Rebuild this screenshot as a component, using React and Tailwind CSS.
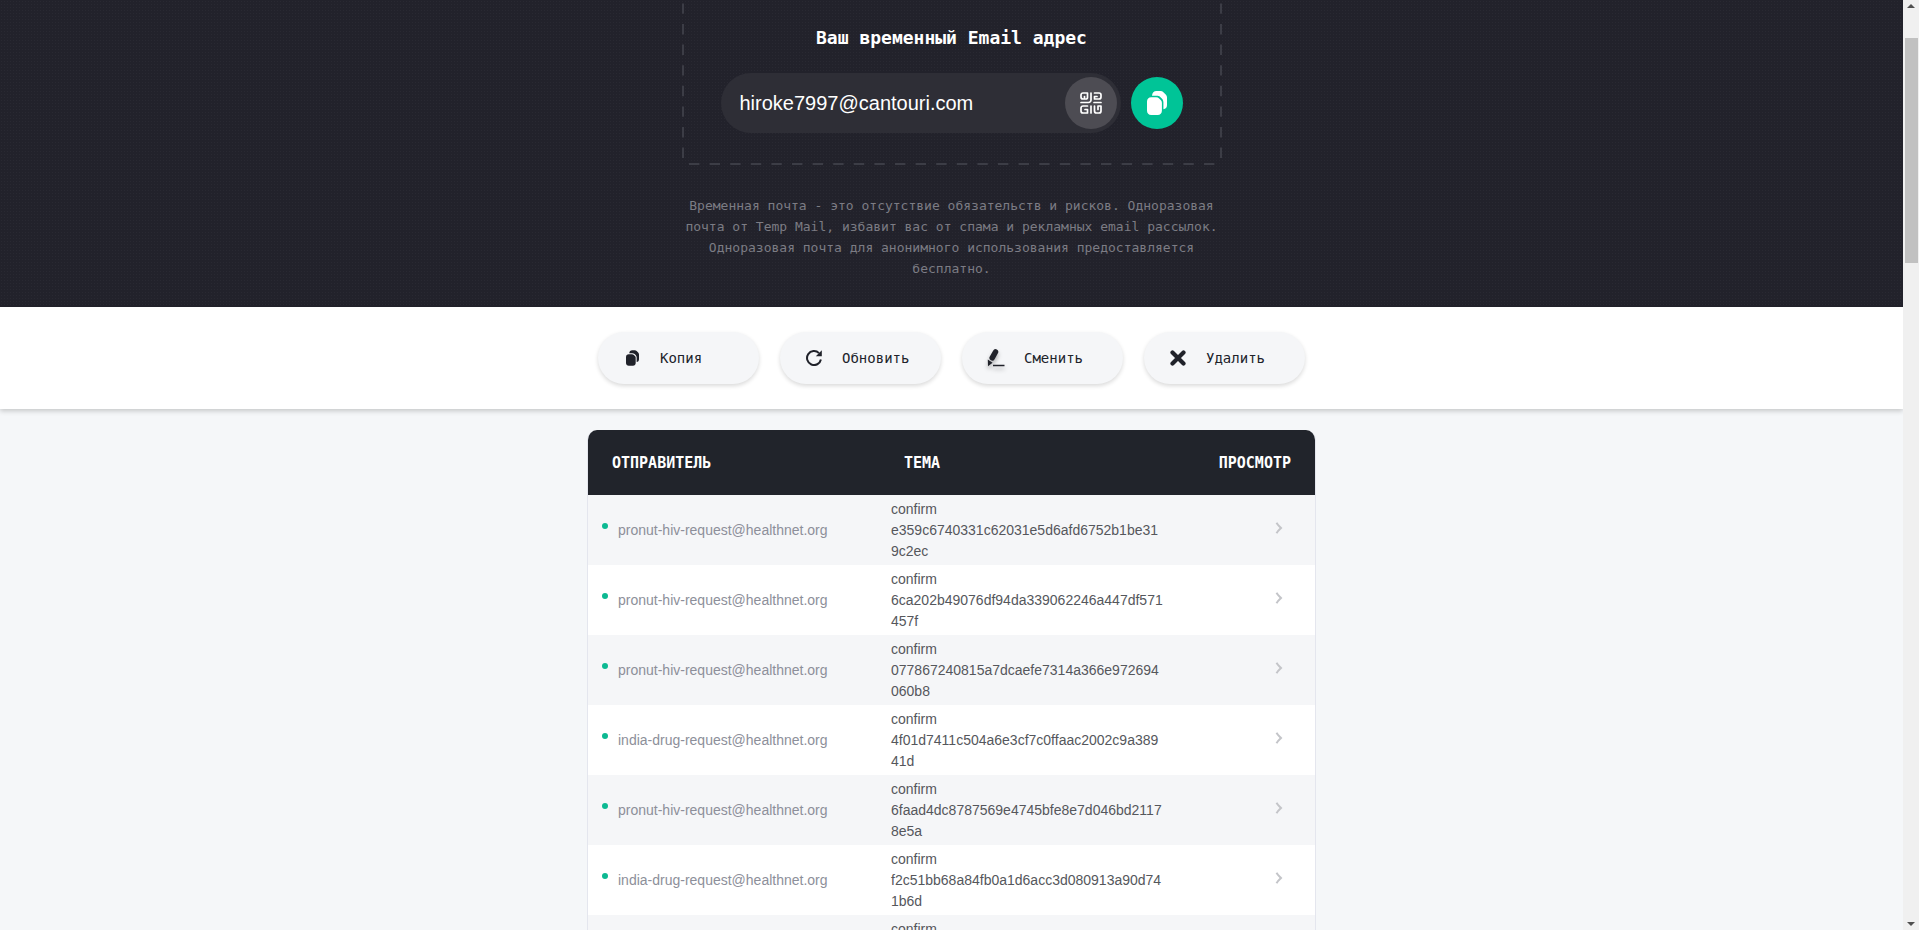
import { useState } from "react";

const EMAIL = "hiroke7997@cantouri.com";

const messages = [
  { id: 1, from: "pronut-hiv-request@healthnet.org", code: "e359c6740331c62031e5d6afd6752b1be319c2ec" },
  { id: 2, from: "pronut-hiv-request@healthnet.org", code: "6ca202b49076df94da339062246a447df571457f" },
  { id: 3, from: "pronut-hiv-request@healthnet.org", code: "077867240815a7dcaefe7314a366e972694060b8" },
  { id: 4, from: "india-drug-request@healthnet.org", code: "4f01d7411c504a6e3cf7c0ffaac2002c9a38941d" },
  { id: 5, from: "pronut-hiv-request@healthnet.org", code: "6faad4dc8787569e4745bfe8e7d046bd21178e5a" },
  { id: 6, from: "india-drug-request@healthnet.org", code: "f2c51bb68a84fb0a1d6acc3d080913a90d741b6d" },
  { id: 7, from: "", code: "" },
];

const CopyIcon = ({ className }) => (
  <svg viewBox="0 0 20 24" className={className} fill="currentColor" aria-hidden="true">
    <path d="M5 4.800C5.200 1.800 6.900 0 9.500 0h4c1.200 0 2.100.4 2.900 1.200l2.300 2.400c.9.9 1.300 1.800 1.300 3v7.400c0 2.500-1.300 4-3.600 4.300V11.300c0-1.600-.5-2.800-1.600-3.900L13.200 5.900C12.200 5 11 4.800 9.600 4.800z" />
    <path d="M4.200 6.200h5c1.200 0 2.100.4 2.900 1.200l1.600 1.600c.8.8 1.200 1.700 1.200 2.800v8c0 2.500-1.700 4.200-4.200 4.200H4.200C1.700 24 0 22.300 0 19.800v-9.400C0 7.900 1.700 6.200 4.200 6.200z" />
  </svg>
);

const QrIcon = () => (
  <svg viewBox="0 0 22 22" className="h-[22px] w-[22px]" fill="none" stroke="currentColor" strokeWidth="1.700" strokeLinecap="round" strokeLinejoin="round" aria-hidden="true">
    <path d="M4.500 4.500V7H3a2 2 0 0 1-2-2V3a2 2 0 0 1 2-2h4.500v4.500A1.500 1.500 0 0 1 6 7" />
    <path d="M11 1v7a2.500 2.500 0 0 1-2.500 2.500H1" />
    <path d="M14.500 1H19a2 2 0 0 1 2 2v2a2 2 0 0 1-2 2h-4.500V4.500H17" />
    <path d="M14 10.500h7" />
    <path d="M7.500 14H3a2 2 0 0 0-2 2v3a2 2 0 0 0 2 2h4.500v-3.500H5" />
    <path d="M11 14v7" />
    <path d="M14.500 14v5a2 2 0 0 0 2 2H19a2 2 0 0 0 2-2v-5h-3v3.500" />
  </svg>
);

const RefreshIcon = () => (
  <svg viewBox="0 0 16 16" className="h-4 w-4" aria-hidden="true">
    <path d="M14.900 9.500A7 7 0 1 1 13 3.100" fill="none" stroke="currentColor" strokeWidth="2" />
    <path d="M15.800.3v6h-6z" fill="currentColor" />
  </svg>
);

const ChangeIcon = () => (
  <svg viewBox="0 0 18 18" className="h-[18px] w-[18px] drop-shadow-[0_3px_2px_rgba(0,0,0,0.3)]" aria-hidden="true">
    <path d="M5.200 8.800 8.500 3" stroke="currentColor" strokeWidth="5.500" strokeLinecap="round" />
    <path d="M.8 10.600 5.600 13.800 1 17.300z" fill="currentColor" />
    <path d="M6 16.500h11.500" stroke="currentColor" strokeWidth="1.500" />
  </svg>
);

const DeleteIcon = () => (
  <svg viewBox="0 0 16 16" className="h-4 w-4" aria-hidden="true">
    <path d="M2.500 2.500l11 11M13.500 2.500l-11 11" stroke="currentColor" strokeWidth="4.200" strokeLinecap="round" />
  </svg>
);

const ActionButton = ({ icon, label, onClick }) => (
  <button
    type="button"
    onClick={onClick}
    className="flex h-[52px] w-[161px] items-center gap-[18px] rounded-full bg-[#f5f6f8] pl-6 text-[14px] text-[#20222a] shadow-[0_2px_4px_rgba(0,0,0,0.15)] hover:bg-gray-200"
  >
    <span className="flex w-5 justify-center">{icon}</span>
    {label}
  </button>
);

const Scrollbar = () => (
  <div className="flex w-4 shrink-0 flex-col items-center bg-[#f0f0f0]" aria-hidden="true">
    <svg viewBox="0 0 8 4" className="mt-1 h-1 w-2" fill="#505050">
      <path d="M4 0l4 4H0z" />
    </svg>
    <div className="mt-[30px] h-[225px] w-[13px] bg-[#c1c1c1]" />
    <svg viewBox="0 0 8 4" className="mt-auto mb-1 h-1 w-2" fill="#505050">
      <path d="M4 4L0 0h8z" />
    </svg>
  </div>
);

const App = () => {
  const [items, setItems] = useState(messages);

  const handleCopy = () => {
    navigator.clipboard?.writeText(EMAIL);
  };

  return (
    <div className="flex h-screen overflow-hidden bg-[#f5f7f9] font-['DejaVu_Sans_Mono',monospace]">
      <div className="min-w-0 flex-1 overflow-hidden">
        <header className="flex flex-col items-center bg-[#22222b] bg-[radial-gradient(circle,rgba(255,255,255,0.03)_1px,transparent_1px)] bg-[size:3px_3px] pb-7">
          <div className="relative w-full max-w-[540px] px-[39px] pt-6 pb-8">
            {/* dashed frame */}
            <svg
              viewBox="0 0 540 165"
              className="pointer-events-none absolute bottom-0 left-0 w-full"
              fill="none"
              stroke="#3c3d46"
              strokeWidth="2"
              strokeDasharray="10.400 10.200"
              aria-hidden="true"
            >
              <path d="M1 158V0" />
              <path d="M539 158V0" />
              <path d="M7 164H534" />
            </svg>
            <h1 className="mb-[21px] text-center text-[18px] leading-7 font-bold text-white">
              Ваш временный Email адрес
            </h1>
            <div className="flex items-center gap-[10px]">
              <div className="flex h-[60px] min-w-0 flex-1 items-center rounded-full bg-[#2e2e36] pr-1 pl-[19px]">
                <input
                  type="text"
                  readOnly
                  value={EMAIL}
                  aria-label="Ваш временный Email адрес"
                  className="min-w-0 flex-1 bg-transparent font-['Liberation_Sans',sans-serif] text-[20px] text-white outline-none"
                />
                <button
                  type="button"
                  aria-label="QR"
                  className="flex h-[52px] w-[52px] items-center justify-center rounded-full bg-[#4d4c53] text-white"
                >
                  <QrIcon />
                </button>
              </div>
              <button
                type="button"
                aria-label="Копия"
                onClick={handleCopy}
                className="flex h-[52px] w-[52px] items-center justify-center rounded-full bg-[#00c497] text-white"
              >
                <CopyIcon className="h-6 w-5" />
              </button>
            </div>
          </div>
          <p className="mt-[30px] max-w-[540px] text-center text-[13px] leading-[21px] text-[#7c7c84]">
            Временная почта - это отсутствие обязательств и рисков. Одноразовая почта от Temp Mail,
            избавит вас от спама и рекламных email рассылок. Одноразовая почта для анонимного
            использования предоставляется бесплатно.
          </p>
        </header>

        <nav className="flex justify-center gap-[21px] bg-white py-[25px] shadow-[0_2px_5px_rgba(0,0,0,0.2)]">
          <ActionButton icon={<CopyIcon className="h-4 w-[13px]" />} label="Копия" onClick={handleCopy} />
          <ActionButton icon={<RefreshIcon />} label="Обновить" onClick={() => setItems(messages)} />
          <ActionButton icon={<ChangeIcon />} label="Сменить" />
          <ActionButton icon={<DeleteIcon />} label="Удалить" onClick={() => setItems([])} />
        </nav>

        <main className="mx-auto mt-[21px] max-w-[729px] overflow-hidden rounded-t-[10px] border-x border-[#e4e6ee] bg-white">
          <table className="w-full table-fixed text-left">
            <thead>
              <tr className="h-[65px] bg-[#21242b] text-[15px] font-bold text-white">
                <th className="w-[303px] pt-[2px] pl-6">ОТПРАВИТЕЛЬ</th>
                <th className="w-[273px] pt-[2px] pl-[13px]">ТЕМА</th>
                <th className="pt-[2px] pr-6 text-right">ПРОСМОТР</th>
              </tr>
            </thead>
            <tbody className="font-['Liberation_Sans',sans-serif] text-[14px] leading-[21px]">
              {items.map((item) => (
                <tr key={item.id} className="h-[70px] odd:bg-[#f5f6f8]">
                  <td className="pl-[14px]">
                    <div className="flex items-center gap-[10px] text-[#8d8f9a]">
                      <span className="mb-2 h-[6px] w-[6px] rounded-full bg-[#0cb992]" />
                      <span>{item.from}</span>
                    </div>
                  </td>
                  <td className="pt-1 align-top break-words text-[#55575c]">confirm {item.code}</td>
                  <td className="pr-8">
                    <a href="#view" aria-label="Просмотр" className="mb-1 flex justify-end text-[#c4c5c9]">
                      <svg viewBox="0 0 8 12" className="h-3 w-2" fill="none" stroke="currentColor" strokeWidth="2" aria-hidden="true">
                        <path d="M1.500.8C3 3.500 4.500 4.500 6 6C4.500 7.500 3 8.500 1.500 11.200" />
                      </svg>
                    </a>
                  </td>
                </tr>
              ))}
            </tbody>
          </table>
        </main>
      </div>
      <Scrollbar />
    </div>
  );
};

export default App;
